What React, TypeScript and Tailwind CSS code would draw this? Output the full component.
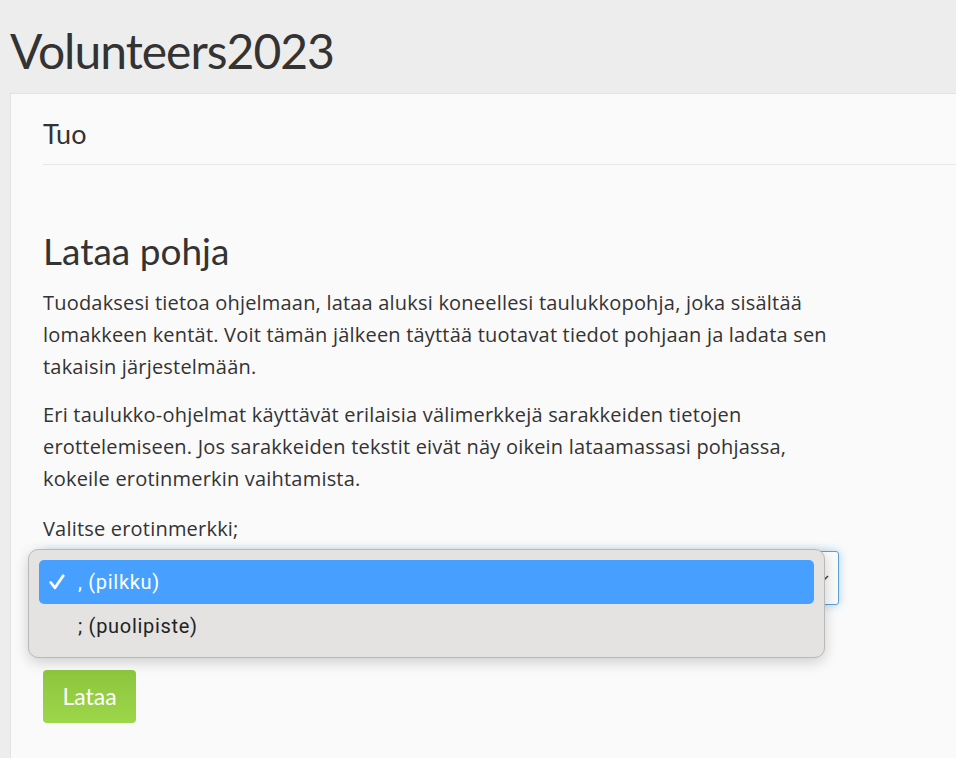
import React from "react";

export default function App() {
  return (
    <div className="min-h-screen w-full overflow-hidden bg-[#ededed] text-[#333333]" style={{ fontFamily: "Lato, 'Noto Sans', sans-serif" }}>
      <h1 className="pl-[10px] pt-[23px] pb-[15px] text-[48px] leading-[55px] tracking-[-1px] font-normal text-[#333]">Volunteers2023</h1>
      <div className="ml-[10px] w-[980px] min-h-[680px] border border-[#e3e3e3] bg-[#fafafa] pl-[32px]">
        <div className="pt-[24px] pb-[14px] border-b border-[#e8e8e8] text-[27px] leading-[32px]">Tuo</div>
        <div className="pt-[64px] w-[830px]">
          <h2 className="text-[37px] leading-[44px] font-normal mb-[14px]">Lataa pohja</h2>
          <div className="text-[20px] leading-[32px] tracking-[0.2px]" style={{ fontFamily: "'Open Sans', 'Noto Sans', sans-serif" }}>
            <p className="mb-[16px]">
              Tuodaksesi tietoa ohjelmaan, lataa aluksi koneellesi taulukkopohja, joka sisältää<br />
              lomakkeen kentät. Voit tämän jälkeen täyttää tuotavat tiedot pohjaan ja ladata sen<br />
              takaisin järjestelmään.
            </p>
            <p className="mb-[18px]">
              Eri taulukko-ohjelmat käyttävät erilaisia välimerkkejä sarakkeiden tietojen<br />
              erottelemiseen. Jos sarakkeiden tekstit eivät näy oikein lataamassasi pohjassa,<br />
              kokeile erotinmerkin vaihtamista.
            </p>
            <p className="mb-[6px]">Valitse erotinmerkki;</p>
          </div>
          <div className="relative w-[796px] h-[54px] rounded-[3px] border border-[#5aa0d8] bg-[#fafafa] shadow-[0_0_10px_rgba(80,160,220,0.45)]">
            <svg className="absolute right-[8px] top-[22px]" width="10" height="10" viewBox="0 0 10 10">
              <path d="M1 9 L8 2" stroke="#444" strokeWidth="1.6" fill="none" />
            </svg>
            <div className="absolute left-[-16px] top-[-3px] w-[797px] h-[109px] rounded-[10px] border border-[#b9b9b9] bg-[#e4e3e2] shadow-[0_4px_14px_rgba(0,0,0,0.18)] px-[10px] pt-[10px]" style={{ fontFamily: "Roboto, 'Liberation Sans', sans-serif" }}>
              <div className="flex items-center h-[44px] rounded-[5px] bg-[#47a0ff] text-white text-[20px] tracking-[0.7px]">
                <svg className="ml-[10px] mr-[13px]" width="16" height="16" viewBox="0 0 16 16">
                  <path d="M1.8 8.5 L6 13.8 L14.2 1.8" stroke="white" strokeWidth="2.8" fill="none" strokeLinecap="round" strokeLinejoin="round" />
                </svg>
                <span>, (pilkku)</span>
              </div>
              <div className="flex items-center h-[44px] text-[#222] text-[20px] tracking-[0.7px]">
                <span className="w-[39px]" />
                <span>; (puolipiste)</span>
              </div>
            </div>
          </div>
          <button className="mt-[65px] h-[53px] w-[93px] rounded-[4px] bg-gradient-to-b from-[#8cc63e] to-[#9dd64a] text-white text-[23px]">Lataa</button>
        </div>
      </div>
    </div>
  );
}
